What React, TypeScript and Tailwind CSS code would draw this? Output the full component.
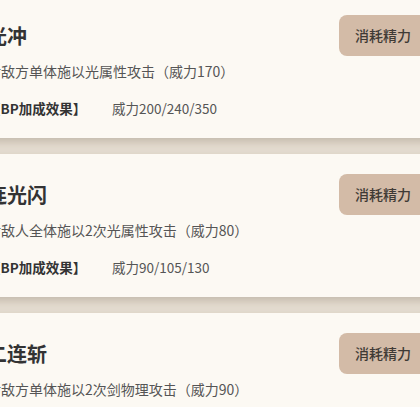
const skills = [
  { name: '光冲', desc: '对敌方单体施以光属性攻击（威力170）', bp: '威力200/240/350' },
  { name: '连光闪', desc: '对敌人全体施以2次光属性攻击（威力80）', bp: '威力90/105/130' },
  { name: '二连斩', desc: '对敌方单体施以2次剑物理攻击（威力90）', bp: '威力100/120/150' },
]

function SkillCard({ name, desc, bp }: { name: string; desc: string; bp: string }) {
  return (
    <div className="flex items-start justify-between bg-[#fcf9f3] px-6 pt-5 pb-5 shadow-[0_4px_10px_rgba(60,40,20,0.22)]">
      <div className="flex flex-col">
        <h3 className="mt-[7px] text-[20px] leading-[28px] font-bold text-[#333333]">{name}</h3>
        <p className="mt-[11px] text-[14px] leading-[20px] text-[#555555]">{desc}</p>
        <div className="mt-[17px] flex text-[13.5px] leading-[20px]">
          <span className="w-[125px] font-bold text-[#333333]">【BP加成效果】</span>
          <span className="text-[#555555]">{bp}</span>
        </div>
      </div>
      <button className="h-[41px] rounded-lg bg-[#d3bba7] px-4 text-[14px] font-medium text-[#3f3a35]">
        消耗精力
      </button>
    </div>
  )
}

export default function App() {
  return (
    <div
      className="h-[407px] w-[420px] overflow-hidden bg-[#e8e0d4]"
      style={{ fontFamily: '"Noto Sans CJK SC", "Noto Sans", sans-serif' }}
    >
      <div className="-mt-[5px] -ml-[37px] flex w-[488px] flex-col gap-4">
        {skills.map((s) => (
          <SkillCard key={s.name} {...s} />
        ))}
      </div>
    </div>
  )
}
